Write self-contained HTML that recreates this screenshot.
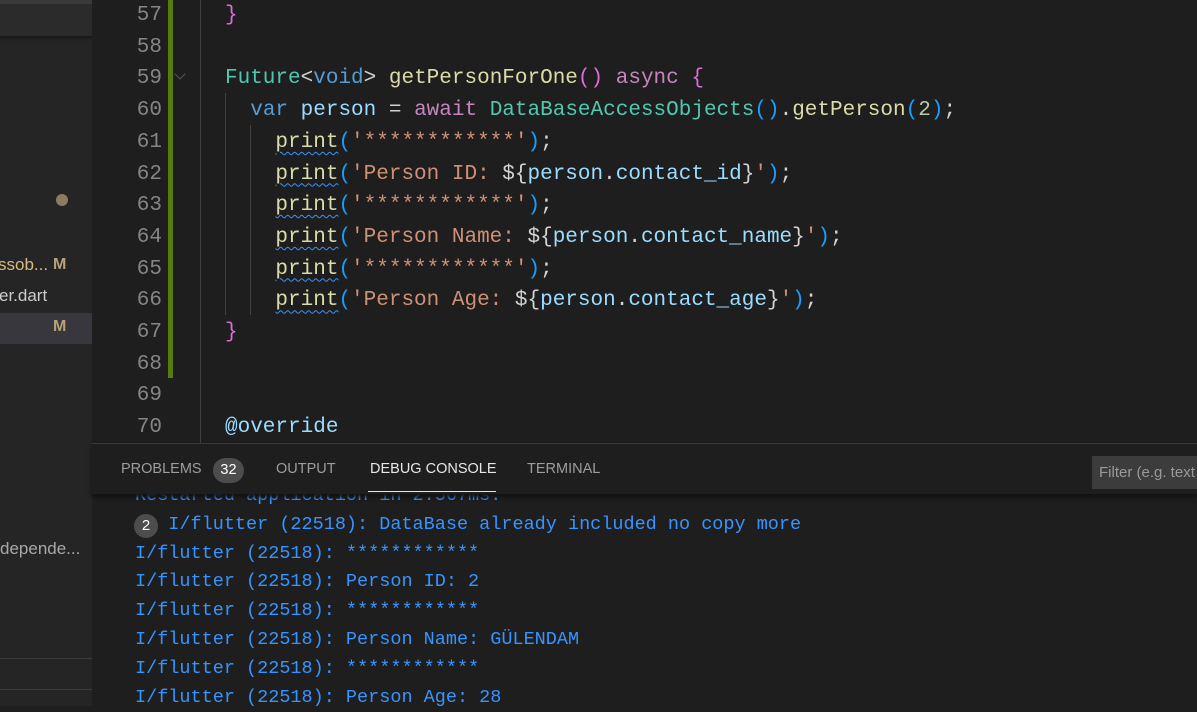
<!DOCTYPE html>
<html><head><meta charset="utf-8"><style>
*{margin:0;padding:0;box-sizing:border-box}
body{width:1197px;height:706px;overflow:hidden;background:#1e1e1e;position:relative;font-family:"Liberation Sans",sans-serif}
#side{position:absolute;left:0;top:0;width:92px;height:706px;background:#252526;overflow:hidden}
.abs{position:absolute}
.mono{font-family:"Liberation Mono",monospace}
#code{position:absolute;left:225px;top:0px;font-size:21px;line-height:31.7px;color:#d4d4d4;white-space:pre}
#nums{position:absolute;left:100px;width:62px;top:0px;font-size:21px;line-height:31.7px;color:#858585;text-align:right;white-space:pre}
.k{color:#569cd6}.t{color:#4ec9b0}.f{color:#dcdcaa}.c{color:#c586c0}.s{color:#ce9178}.v{color:#9cdcfe}.n{color:#b5cea8}.b{color:#179fff}.p{color:#da70d6}
.w{text-decoration:underline wavy #3794ff;text-underline-offset:4px;text-decoration-thickness:1px}
#panel{position:absolute;left:92px;top:443px;width:1105px;height:263px;background:#1e1e1e;border-top:1px solid #3c3c3c}
#tabs{position:absolute;left:0;top:0;width:1105px;height:50px;box-shadow:0 3px 4px #111}
.tab{position:absolute;top:17px;font-size:14.5px;color:#9d9d9d}
#con{position:absolute;left:43px;top:38px;font-size:18.5px;line-height:28.8px;color:#3794ff;white-space:pre}
</style></head><body>
<div id="side">
 <div class="abs" style="left:0;top:0;width:92px;height:36px;background:#2b2b2c;border-top:4px solid #3a3a3a;box-shadow:0 2px 3px #161616"></div>
 <div class="abs" style="left:56px;top:194px;width:12px;height:12px;border-radius:6px;background:#8c7b62"></div>
 <div class="abs" style="left:-2px;top:255px;font-size:17px;color:#d7ba7d">ssob...</div>
 <div class="abs" style="left:53px;top:256px;font-size:16px;font-weight:bold;color:#b8a27a">M</div>
 <div class="abs" style="left:-1px;top:286px;font-size:17px;color:#cccccc">er.dart</div>
 <div class="abs" style="left:0;top:313px;width:92px;height:31px;background:#37373d"></div>
 <div class="abs" style="left:53px;top:318px;font-size:16px;font-weight:bold;color:#b8a27a">M</div>
 <div class="abs" style="left:0;top:539px;font-size:17px;color:#a8a8a8">depende...</div>
 <div class="abs" style="left:0;top:658px;width:92px;height:1px;background:#3c3c3c"></div>
 <div class="abs" style="left:0;top:689px;width:92px;height:1px;background:#3c3c3c"></div>
</div>
<div class="abs" style="left:168px;top:0;width:5px;height:378px;background:#587c0c"></div>
<div class="abs" style="left:200px;top:0;width:1px;height:443px;background:#404040"></div>
<div class="abs" style="left:225px;top:93px;width:1px;height:222px;background:#404040"></div>
<div class="abs" style="left:250px;top:125px;width:1px;height:190px;background:#404040"></div>
<div class="abs" style="left:176px;top:70px;width:8px;height:8px;border-right:1px solid #555;border-bottom:1px solid #555;transform:rotate(45deg)"></div>
<div id="nums" class="mono">57
58
59
60
61
62
63
64
65
66
67
68
69
70</div>
<div id="code" class="mono"><span class="p">}</span>

<span class="t">Future</span>&lt;<span class="k">void</span>&gt; <span class="f">getPersonForOne</span><span class="p">()</span> <span class="c">async</span> <span class="p">{</span>
  <span class="k">var</span> <span class="v">person</span> = <span class="c">await</span> <span class="t">DataBaseAccessObjects</span><span class="b">()</span>.<span class="f">getPerson</span><span class="b">(</span><span class="n">2</span><span class="b">)</span>;
    <span class="f w">print</span><span class="b">(</span><span class="s">'************'</span><span class="b">)</span>;
    <span class="f w">print</span><span class="b">(</span><span class="s">'Person ID: </span>${<span class="v">person</span>.<span class="v">contact_id</span>}<span class="s">'</span><span class="b">)</span>;
    <span class="f w">print</span><span class="b">(</span><span class="s">'************'</span><span class="b">)</span>;
    <span class="f w">print</span><span class="b">(</span><span class="s">'Person Name: </span>${<span class="v">person</span>.<span class="v">contact_name</span>}<span class="s">'</span><span class="b">)</span>;
    <span class="f w">print</span><span class="b">(</span><span class="s">'************'</span><span class="b">)</span>;
    <span class="f w">print</span><span class="b">(</span><span class="s">'Person Age: </span>${<span class="v">person</span>.<span class="v">contact_age</span>}<span class="s">'</span><span class="b">)</span>;
<span class="p">}</span>


<span class="v">@override</span></div>
<div id="panel">
 <div id="con" class="mono">Restarted application in 2.567ms.
   I/flutter (22518): DataBase already included no copy more
I/flutter (22518): ************
I/flutter (22518): Person ID: 2
I/flutter (22518): ************
I/flutter (22518): Person Name: GÜLENDAM
I/flutter (22518): ************
I/flutter (22518): Person Age: 28</div>
 <div class="abs" style="left:42px;top:70px;width:24px;height:24px;border-radius:12px;background:#4d4d4d;color:#fff;font-size:15px;text-align:center;line-height:24px">2</div>
 <div id="tabs" style="background:#1e1e1e">
  <div class="tab" style="left:29px">PROBLEMS</div>
  <div class="abs" style="left:121px;top:14px;width:31px;height:25px;border-radius:13px;background:#4d4d4d;color:#fff;font-size:14.5px;text-align:center;line-height:25px">32</div>
  <div class="tab" style="left:184px">OUTPUT</div>
  <div class="tab" style="left:278px;color:#e7e7e7">DEBUG CONSOLE</div>
  <div class="abs" style="left:276px;top:47px;width:128px;height:1px;background:#e7e7e7"></div>
  <div class="tab" style="left:435px">TERMINAL</div>
  <div class="abs" style="left:1000px;top:12px;width:105px;height:33px;background:#3c3c3c;color:#9a9a9a;font-size:15px;line-height:33px;padding-left:7px;white-space:nowrap;overflow:hidden">Filter (e.g. text</div>
 </div>
</div>
</body></html>
